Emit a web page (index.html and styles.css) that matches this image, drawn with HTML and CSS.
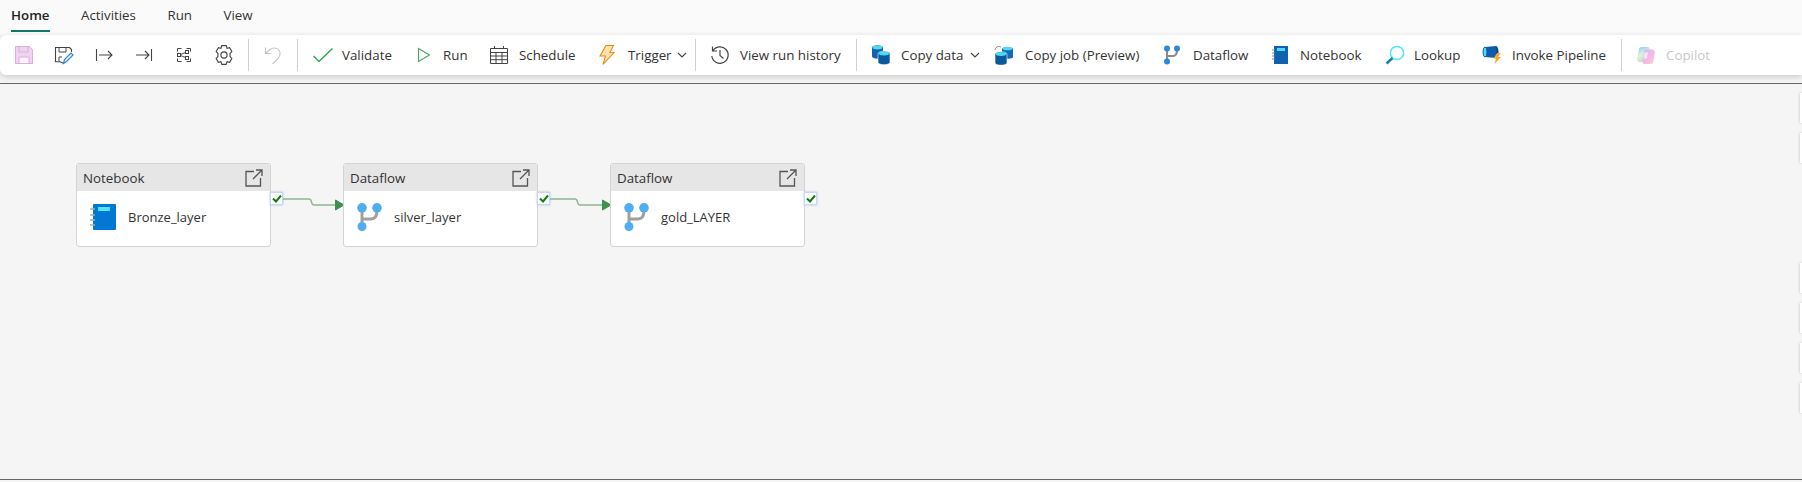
FILE: index.html
```html
<!DOCTYPE html>
<html lang="en">
<head>
    <meta charset="UTF-8">
    <title>Pipeline</title>
    <link rel="stylesheet" href="styles.css">
</head>
<body>
    <nav class="tabs">
        <a class="tab active">Home</a>
        <a class="tab">Activities</a>
        <a class="tab">Run</a>
        <a class="tab">View</a>
    </nav>

    <div class="toolbar">
        <button class="tool icon-only"><svg width="20" height="20" viewBox="0 0 20 20"><path d="M1.500 1.500h14l3 3v14h-17z" fill="#efd3ef" stroke="#dcaedc"/><path d="M5 1.500h9v5.500H5z" fill="#efd3ef" stroke="#dcaedc"/><path d="M5 18.500v-6.500h10v6.500z" fill="#fbf3fb" stroke="#dcaedc"/></svg></button>
        <button class="tool icon-only"><svg width="20" height="20" viewBox="0 0 20 20" fill="none"><path d="M10 18.500L6 16.800H1.500V2.500H15.500L17.500 4.500V7" stroke="#444" stroke-width="1.100"/><path d="M5 2.500V7H12V2.500M5 16V12H8" stroke="#444"/><path d="M9.500 18.500L10.500 14.500L17 8L19 10L12.500 16.500Z" fill="#fff" stroke="#2b88d8" stroke-width="1.200"/></svg></button>
        <button class="tool icon-only"><svg width="20" height="20" viewBox="0 0 20 20" fill="none" stroke="#444" stroke-width="1.100"><path d="M2.500 4v12M5 10h13M14 6l4 4-4 4"/></svg></button>
        <button class="tool icon-only"><svg width="20" height="20" viewBox="0 0 20 20" fill="none" stroke="#444" stroke-width="1.100"><path d="M17.500 4v12M2 10h13M11 6l4 4-4 4"/></svg></button>
        <button class="tool icon-only"><svg width="20" height="20" viewBox="0 0 20 20" fill="none" stroke="#444" stroke-width="1"><path d="M3.500 6.500v-3h4M3.500 13.500v3h4M16.500 13.500v3h-4M16.500 6.500v-3h-4"/><rect x="3.500" y="8.500" width="3" height="3"/><rect x="11.500" y="5.500" width="3" height="3"/><rect x="11.500" y="11.500" width="3" height="3"/><path d="M6.500 9.500L11.500 7.500M6.500 10.500L11.500 12.500"/></svg></button>
        <button class="tool icon-only"><svg width="22" height="22" viewBox="1 0 18 20" fill="none" stroke="#444"><path d="M8 1.500h4l.8 2.500 2.300-.6 2 3.400L15.500 8.700v2.600l1.600 1.900-2 3.400-2.300-.6-.8 2.500H8l-.8-2.500-2.300.6-2-3.400 1.600-1.900V8.700L2.900 6.800l2-3.400 2.300.6z"/><circle cx="10" cy="10" r="2.800"/></svg></button>
        <span class="sep sep-a"></span>
        <button class="tool icon-only tool-undo"><svg width="20" height="20" viewBox="0 0 20 20" fill="none" stroke="#c4c4c4" stroke-width="1.100"><path d="M2.500 2.500v6h6M2.500 8.500L7 4.500c3-2.500 8-1.500 9.500 1.500 1.500 3.500 0 6-2 8l-5 5"/></svg></button>
        <span class="sep sep-b"></span>

        <button class="tool tool-validate"><svg width="22" height="16" viewBox="0 0 22 16" fill="none"><path d="M1.500 9l5.500 5.500L20.500 1.500" stroke="#2fa84f" stroke-width="1.500"/></svg><span>Validate</span></button>
        <button class="tool tool-run"><svg width="14" height="16" viewBox="0 0 14 16" fill="none"><path d="M1.500 1.500L12.500 8L1.500 14.500z" stroke="#46a868" stroke-width="1.100"/></svg><span>Run</span></button>
        <button class="tool tool-schedule"><svg width="18" height="18" viewBox="0 0 18 18" fill="none" stroke="#444"><path d="M.5 2.500h17v15H.5zM.5 6.500h17M.5 10h17M.5 13.700h17M6 6.500v11M12 6.500v11M4.500 0v2.500M13.500 0v2.500"/></svg><span>Schedule</span></button>
        <button class="tool tool-trigger"><svg width="16" height="20" viewBox="0 0 16 20"><path d="M7 .5h7.500L11 7.500h4L4 19.500l2.500-8.500H1z" fill="#fce3ad" stroke="#ea8a16" stroke-width="1.100"/></svg><span>Trigger</span><svg class="chev" width="10" height="6" viewBox="0 0 10 6" fill="none"><path d="M1 1l4 4 4-4" stroke="#444" stroke-width="1.100"/></svg></button>
        <span class="sep sep-c"></span>
        <button class="tool tool-history"><svg width="20" height="20" viewBox="0 0 20 20" fill="none" stroke="#444" stroke-width="1.200"><path d="M2.500 1.500v4.500H7M2.800 6A8.200 8.200 0 1 1 1.800 11M10 5v5.500l3.500 3"/></svg><span>View run history</span></button>
        <span class="sep sep-d"></span>

        <button class="tool tool-copydata"><svg width="20" height="20" viewBox="0 0 20 20"><path d="M1 2.500a5.500 2.200 0 0 1 11 0v9a5.500 2.200 0 0 1-11 0z" fill="#0f62ad"/><ellipse cx="6.500" cy="2.500" rx="5" ry="1.900" fill="#50d9f0"/><path d="M7 8.500a6 2.200 0 0 1 12 0v9a6 2.200 0 0 1-12 0z" fill="#0b5a9e" stroke="#fff" stroke-width=".6"/><ellipse cx="13" cy="8.500" rx="5.300" ry="1.900" fill="#50d9f0"/></svg><span>Copy data</span><svg class="chev" width="10" height="6" viewBox="0 0 10 6" fill="none"><path d="M1 1l4 4 4-4" stroke="#444" stroke-width="1.100"/></svg></button>
        <button class="tool tool-copyjob"><svg width="20" height="20" viewBox="0 0 20 20"><path d="M8 3.500a6 2.200 0 0 1 11 0v9a6 2.200 0 0 1-11 0z" fill="#0f6cbd"/><ellipse cx="13.500" cy="3.500" rx="5" ry="1.800" fill="#50d9f0"/><path d="M1 9a6 2.200 0 0 1 12 0v9a6 2.200 0 0 1-12 0z" fill="#0b5a9e" stroke="#fff" stroke-width=".6"/><ellipse cx="7" cy="9" rx="5.300" ry="1.900" fill="#50d9f0"/><path d="M1 5a4 4 0 0 1 6-3" fill="none" stroke="#999"/></svg><span>Copy job (Preview)</span></button>
        <button class="tool tool-dataflow"><svg width="18" height="20" viewBox="0 0 18 20"><path d="M4 3v14M4 11h6c3 0 4-2 4-6" fill="none" stroke="#8a8a8a" stroke-width="2"/><circle cx="4" cy="3.500" r="3" fill="#2b88d8"/><circle cx="14" cy="3.500" r="3" fill="#2b88d8"/><circle cx="4" cy="16.500" r="3" fill="#2b88d8"/></svg><span>Dataflow</span></button>
        <button class="tool tool-notebook"><svg width="18" height="20" viewBox="0 0 18 20"><use href="#notebook"/></svg><span>Notebook</span></button>
        <button class="tool tool-lookup"><svg width="20" height="20" viewBox="0 0 20 20" fill="none"><circle cx="12" cy="8" r="6.600" stroke="#50e6ff" stroke-width="1.500"/><path d="M7.500 13L1.500 18.500" stroke="#1a7fb0" stroke-width="2.500"/></svg><span>Lookup</span></button>
        <button class="tool tool-invoke"><svg width="20" height="20" viewBox="0 0 20 20"><path d="M3 2l11-1v12l-11-1z" fill="#0f5cad"/><ellipse cx="3" cy="7" rx="2" ry="5" fill="#50d9f0" stroke="#0f5cad"/><path d="M14 1a2.500 6 0 0 1 0 12" fill="#0b4a8e"/><path d="M15 8h4l-3 4h3l-6.500 7L14 13.500h-2.500z" fill="#f9a825"/></svg><span>Invoke Pipeline</span></button>
        <span class="sep sep-e"></span>
        <button class="tool tool-copilot"><svg width="18" height="18" viewBox="0 0 18 18"><defs><linearGradient id="cop-l" x1="0" y1="0" x2="0.300" y2="1"><stop offset="0" stop-color="#6cc4f5"/><stop offset=".55" stop-color="#d8f0d0"/><stop offset="1" stop-color="#a8e6a0"/></linearGradient><linearGradient id="cop-r" x1="0" y1="0" x2="1" y2="1"><stop offset="0" stop-color="#c8a8f5"/><stop offset=".6" stop-color="#f6a8e0"/><stop offset="1" stop-color="#fbc8a8"/></linearGradient></defs><path d="M4.500 1h6c1.500 0 2.300 1 2.500 2.500L11 14.500c-.3 1-1 1.500-2 1.500H3c-2 0-3-1.500-2.700-3.500l1.500-9C2 2 3 1 4.500 1z" fill="url(#cop-l)"/><path d="M9 3.500h6c2 0 3 1.500 2.700 3.500l-1.300 8.500c-.3 1.500-1.400 2.500-2.900 2.500h-6c-1.500 0-2.300-1-2-2.500L7 5.500C7.200 4.300 8 3.500 9 3.500z" fill="url(#cop-r)"/><path d="M7.500 6.500h3.500l-1 6H6.500z" fill="#fff" opacity=".6"/></svg><span>Copilot</span></button>
    </div>

    <main class="canvas">
        <svg class="wires" width="1802" height="393" fill="none">
            <path d="M283 115h26c4 0 1 6 5 6h23" stroke="#8db78e" stroke-width="1.500"/>
            <path d="M335.500 116l8.500 5-8.500 5z" fill="#3f8f4f" stroke="#3f8f4f"/>
            <path d="M550 115h25c4 0 1 6 5 6h24" stroke="#8db78e" stroke-width="1.500"/>
            <path d="M602.500 116l8.500 5-8.500 5z" fill="#3f8f4f" stroke="#3f8f4f"/>
        </svg>

        <div class="node node-1">
            <div class="node-head"><span>Notebook</span><svg class="open" width="18" height="18" viewBox="0 0 18 18" fill="none" stroke="#555" stroke-width="1.300"><use href="#open"/></svg></div>
            <div class="node-body"><svg class="nb-icon" width="26" height="28" viewBox="0 0 26 28"><use href="#notebook-lg"/></svg><span>Bronze_layer</span></div>
            <span class="check"><svg width="10" height="9" viewBox="0 0 10 9" fill="none"><path d="M1 4.500l3 3 5-6" stroke="#107c10" stroke-width="2"/></svg></span>
        </div>
        <div class="node node-2">
            <div class="node-head"><span>Dataflow</span><svg class="open" width="18" height="18" viewBox="0 0 18 18" fill="none" stroke="#555" stroke-width="1.300"><use href="#open"/></svg></div>
            <div class="node-body"><svg class="df-icon" width="26" height="28" viewBox="0 0 26 28"><use href="#flow-lg"/></svg><span>silver_layer</span></div>
            <span class="check"><svg width="10" height="9" viewBox="0 0 10 9" fill="none"><path d="M1 4.500l3 3 5-6" stroke="#107c10" stroke-width="2"/></svg></span>
        </div>
        <div class="node node-3">
            <div class="node-head"><span>Dataflow</span><svg class="open" width="18" height="18" viewBox="0 0 18 18" fill="none" stroke="#555" stroke-width="1.300"><use href="#open"/></svg></div>
            <div class="node-body"><svg class="df-icon" width="26" height="28" viewBox="0 0 26 28"><use href="#flow-lg"/></svg><span>gold_LAYER</span></div>
            <span class="check"><svg width="10" height="9" viewBox="0 0 10 9" fill="none"><path d="M1 4.500l3 3 5-6" stroke="#107c10" stroke-width="2"/></svg></span>
        </div>

        <div class="side side-top"><span></span><span></span></div>
        <div class="side side-bottom"><span></span><span></span><span></span><span></span></div>
    </main>

    <svg width="0" height="0" class="defs">
        <defs>
            <g id="open"><path d="M9 2.500H1v14.500h14.500V9M8 10L17 1M11 1h6v6"/></g>
            <g id="notebook"><path d="M3 1h14v18H3z" fill="#0f62ad"/><path d="M6 3h8v3H6z" fill="#50d9f0"/><path d="M1 5h3M1 8h3M1 11h3M1 14h3" stroke="#888"/></g>
            <g id="notebook-lg"><rect x="3" y="1" width="23" height="26" rx="1" fill="#0078d4"/><rect x="8" y="4" width="12" height="4" fill="#50e6ff"/><path d="M0 6h5M0 12h5M0 17h5M0 22h5" stroke="#aaa" stroke-width="1.500"/></g>
            <g id="flow-lg"><path d="M5 5V23M5 16h9c4 0 6-3 6-9" fill="none" stroke="#a0a0a0" stroke-width="3"/><circle cx="5" cy="4.800" r="4.800" fill="#50aef0"/><circle cx="20" cy="4.800" r="4.800" fill="#50aef0"/><circle cx="5" cy="23.500" r="4.500" fill="#50aef0"/></g>
        </defs>
    </svg>
</body>
</html>
```

FILE: styles.css
```css
html, body {
    margin: 0;
    height: 100%;
}
body {
    font-family: "Open Sans", "Noto Sans", Arial, sans-serif;
    font-size: 13.33px;
    color: #333;
    background-color: #f5f5f5;
    overflow: hidden;
}
.tabs {
    height: 35px;
    background-color: #fafafa;
    display: flex;
    padding-left: 11px;
    gap: 31.5px;
    box-sizing: border-box;
}
.tab {
    height: 30px;
    line-height: 31px;
    color: #333;
}
.tab.active {
    font-weight: 600;
    color: #222;
    border-bottom: 2px solid #117865;
}
.toolbar {
    height: 40px;
    background-color: #fff;
    border-radius: 6px 0 0 6px;
    box-shadow: 0 2px 6px rgba(0, 0, 0, 0.18);
    display: flex;
    align-items: center;
    padding-left: 4px;
    position: relative;
    z-index: 2;
}
.tool {
    border: none;
    background: none;
    font: inherit;
    color: #333;
    padding: 0;
    display: flex;
    align-items: center;
    flex: none;
    height: 40px;
    white-space: nowrap;
}
.tool svg {
    flex: none;
}
.icon-only {
    width: 40px;
    justify-content: center;
}
.chev {
    margin-left: 7px;
}
.tool-trigger .chev {
    margin-left: 5px;
}
.sep {
    flex: none;
    width: 1px;
    height: 32px;
    background-color: #d0d0d0;
}
.sep-a { margin-left: 4px; }
.sep-b { margin: 0 14px 0 4px; }
.sep-c { margin-right: 14px; }
.sep-d { margin-right: 14px; }
.sep-e { margin-right: 15px; }
.tool-undo { margin-left: 4px; }
.tool-validate { width: 105px; }
.tool-validate span { margin-left: 8px; }
.tool-run { width: 73px; }
.tool-run span { margin-left: 12px; }
.tool-schedule { width: 109px; }
.tool-schedule span { margin-left: 11px; }
.tool-trigger { width: 96px; }
.tool-trigger span { margin-left: 13px; }
.tool-history { width: 146px; }
.tool-history span { margin-left: 10px; }
.tool-copydata { width: 123px; }
.tool-copydata span { margin-left: 10px; }
.tool-copyjob { width: 169px; }
.tool-copyjob span { margin-left: 11px; }
.tool-dataflow { width: 108px; }
.tool-dataflow span { margin-left: 12px; }
.tool-notebook { width: 114px; }
.tool-notebook span { margin-left: 11px; }
.tool-lookup { width: 97px; }
.tool-lookup span { margin-left: 9px; }
.tool-invoke { width: 139px; }
.tool-invoke span { margin-left: 10px; }
.tool-copilot { color: #c8c8c8; }
.tool-copilot svg { opacity: 0.8; }
.tool-copilot span { margin-left: 11px; }

.canvas {
    height: 397px;
    box-sizing: border-box;
    margin-top: 8px;
    border-top: 1px solid #666;
    border-bottom: 1px solid #666;
    position: relative;
    background-color: #f5f5f5;
}
.wires {
    position: absolute;
    left: 0;
    top: 0;
}
.defs {
    position: absolute;
}
.node {
    position: absolute;
    top: 79px;
    width: 195px;
    height: 84px;
    box-sizing: border-box;
    border: 1px solid #d4d4d4;
    border-radius: 3px;
    background-color: #fff;
}
.node-1 { left: 76px; }
.node-2 { left: 343px; }
.node-3 { left: 610px; }
.node-head {
    height: 27px;
    background-color: #e6e6e6;
    display: flex;
    align-items: center;
    justify-content: space-between;
    padding: 0 7px 0 6px;
}
.node-body {
    display: flex;
    align-items: center;
    height: 52px;
    font-size: 13px;
}
.nb-icon {
    margin-left: 13px;
    margin-right: 12px;
}
.df-icon {
    margin-left: 13px;
    margin-right: 11px;
}
.check {
    position: absolute;
    left: 193px;
    top: 28px;
    width: 11px;
    height: 11px;
    background-color: #fff;
    border: 1px solid #c5daef;
    box-shadow: 0 0 2px rgba(70, 130, 200, 0.5);
    display: flex;
    align-items: center;
    justify-content: center;
}
.side {
    position: absolute;
    right: 0;
    display: flex;
    flex-direction: column;
    gap: 10px;
}
.side span {
    width: 2px;
    height: 30px;
    background-color: #fff;
    box-shadow: 0 0 3px rgba(0, 0, 0, 0.25);
}
.side-top { top: 9px; }
.side-bottom { top: 179px; }
```
